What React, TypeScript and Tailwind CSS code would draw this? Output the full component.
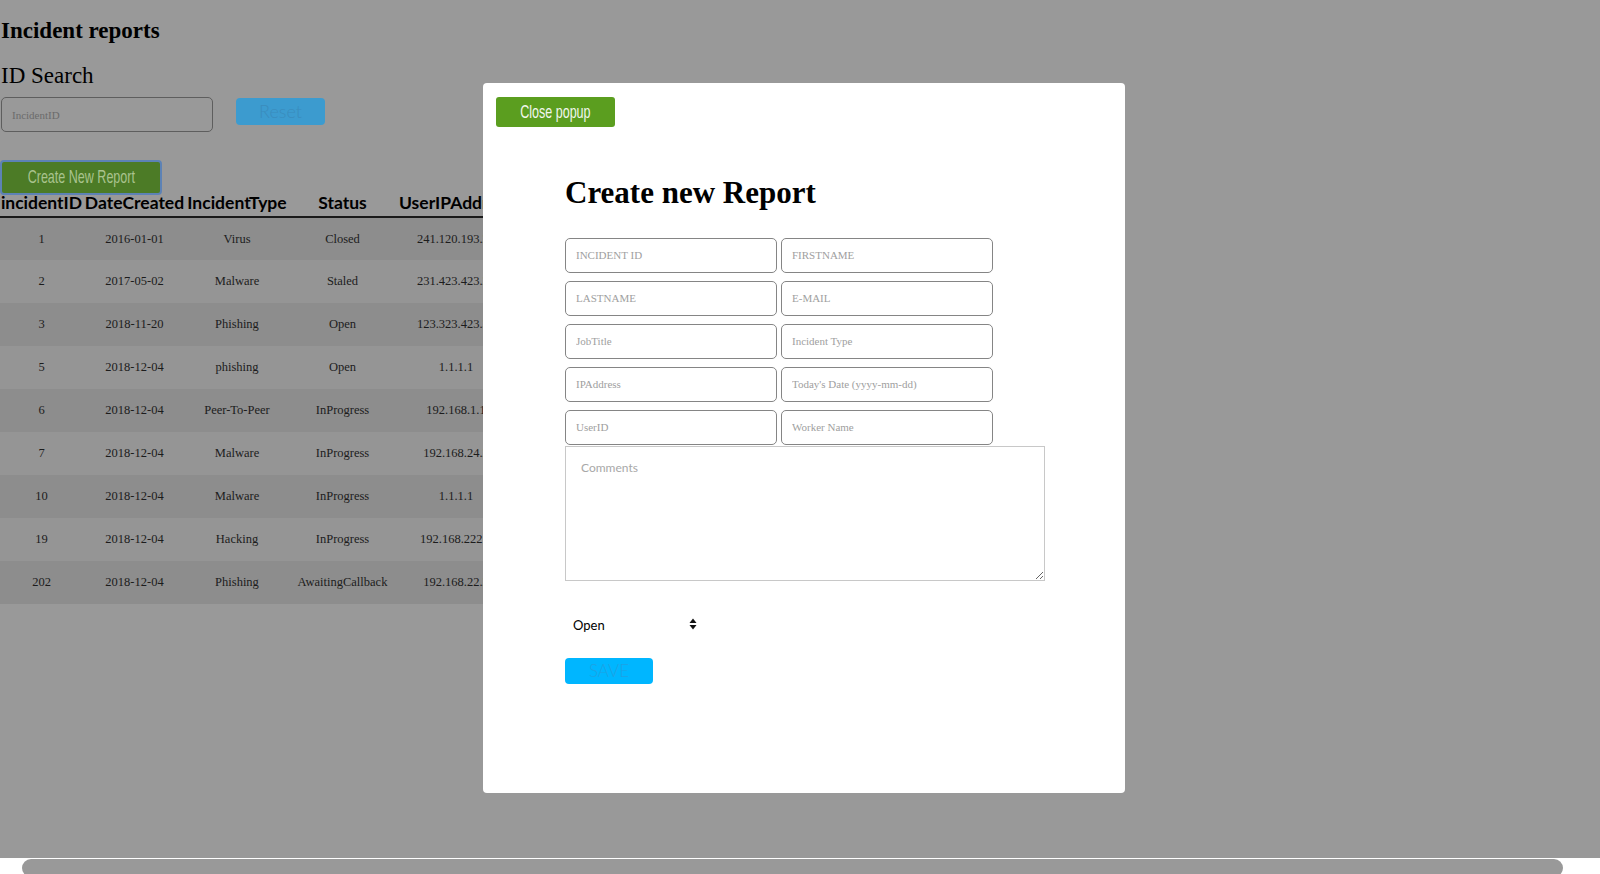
import { useState } from 'react';

// Incident rows shown behind the popup
const incidents = [
    { id: '1', date: '2016-01-01', type: 'Virus', status: 'Closed', ip: '241.120.193.24' },
    { id: '2', date: '2017-05-02', type: 'Malware', status: 'Staled', ip: '231.423.423.23' },
    { id: '3', date: '2018-11-20', type: 'Phishing', status: 'Open', ip: '123.323.423.33' },
    { id: '5', date: '2018-12-04', type: 'phishing', status: 'Open', ip: '1.1.1.1' },
    { id: '6', date: '2018-12-04', type: 'Peer-To-Peer', status: 'InProgress', ip: '192.168.1.1' },
    { id: '7', date: '2018-12-04', type: 'Malware', status: 'InProgress', ip: '192.168.24.2' },
    { id: '10', date: '2018-12-04', type: 'Malware', status: 'InProgress', ip: '1.1.1.1' },
    { id: '19', date: '2018-12-04', type: 'Hacking', status: 'InProgress', ip: '192.168.222.1' },
    { id: '202', date: '2018-12-04', type: 'Phishing', status: 'AwaitingCallback', ip: '192.168.22.2' },
];

const formFields = [
    'INCIDENT ID', 'FIRSTNAME',
    'LASTNAME', 'E-MAIL',
    'JobTitle', 'Incident Type',
    'IPAddress', "Today's Date (yyyy-mm-dd)",
    'UserID', 'Worker Name',
];

function SelectArrows() {
    return (
        <svg width="8" height="12" viewBox="0 0 8 12" className="pointer-events-none absolute left-[124px] top-[6px]">
            <path d="M4 0.5 L7.5 5 H0.5 Z" fill="#111" />
            <path d="M4 11.5 L7.5 7 H0.5 Z" fill="#111" />
        </svg>
    );
}

// narrow display font stand-in (no condensed family installed)
function Narrow({ children }: { children: string }) {
    return <span className="inline-block whitespace-nowrap scale-x-[0.66] font-['Liberation_Sans',sans-serif]">{children}</span>;
}

export default function App() {
    const [status, setStatus] = useState('Open');

    return (
        <div className="w-[1600px] h-[874px] overflow-hidden flex flex-col bg-white">
            <div className="relative h-[858px] bg-[#999999] pl-px">
                <h2 className="mt-[14px] text-[23px] leading-normal font-bold text-black font-['Liberation_Serif',serif]">
                    Incident reports
                </h2>
                <h3 className="mt-[10px] text-[23px] leading-normal text-black font-['Liberation_Serif',serif]">
                    ID Search
                </h3>
                <div className="mt-[4px] flex items-start gap-[23px]">
                    <input
                        placeholder="IncidentID"
                        className="w-[212px] h-[35px] rounded-[5px] border border-[#5e5e5e] bg-transparent px-[10px] text-[11px] font-['Liberation_Serif',serif] placeholder:text-[#6b6b6b] outline-none"
                    />
                    <button className="mt-px w-[89px] h-[27px] rounded-[4px] bg-[#3c9bcf] text-[18px] font-light text-[#3a8cbd] font-['Lato',sans-serif]">
                        Reset
                    </button>
                </div>
                <button className="mt-[28px] -ml-px flex items-center justify-center w-[162px] h-[35px] rounded-[4px] border-2 border-[#5d82b5] bg-[#4c7b26] text-[19px] text-[#a9c38e]">
                    <Narrow>Create New Report</Narrow>
                </button>

                <table className="table-fixed border-collapse -ml-px w-[515px]">
                    <thead>
                        <tr className="border-b-2 border-[#1a1a1a] font-['Lato',sans-serif] text-[17.5px] leading-[16px] font-bold text-black">
                            <th className="w-[83px] p-0 pb-[5px] font-bold">incidentID</th>
                            <th className="w-[103px] p-0 pb-[5px] font-bold">DateCreated</th>
                            <th className="w-[102px] p-0 pb-[5px] font-bold">IncidentType</th>
                            <th className="w-[109px] p-0 pb-[5px] font-bold">Status</th>
                            <th className="w-[118px] p-0 pb-[5px] font-bold whitespace-nowrap">UserIPAddress</th>
                        </tr>
                    </thead>
                    <tbody className="font-['Liberation_Serif',serif] text-[12.5px] text-[#1c1c1c]">
                        {incidents.map((r, i) => (
                            <tr key={r.id} className={i % 2 === 0 ? 'h-[43px] bg-[#8d8d8d]' : 'h-[43px] bg-[#959595]'}>
                                <td className="text-center">{r.id}</td>
                                <td className="text-center">{r.date}</td>
                                <td className="text-center">{r.type}</td>
                                <td className="text-center">{r.status}</td>
                                <td className="text-center whitespace-nowrap">{r.ip}</td>
                            </tr>
                        ))}
                    </tbody>
                </table>

                {/* popup */}
                <div className="absolute left-[483px] top-[83px] w-[642px] h-[710px] rounded-[4px] bg-white">
                    <button className="ml-[13px] mt-[14px] flex items-center justify-center w-[119px] h-[30px] rounded-[3px] bg-[#5b9e1f] text-[19px] text-[#f2f7ee]">
                        <Narrow>Close popup</Narrow>
                    </button>
                    <div className="ml-[82px]">
                        <h1 className="mt-[43px] text-[31px] leading-normal font-bold text-black font-['Liberation_Serif',serif]">
                            Create new Report
                        </h1>
                        <div className="mt-[21px] grid grid-cols-[212px_212px] gap-x-[4px] gap-y-[8px]">
                            {formFields.map((f) => (
                                <input
                                    key={f}
                                    placeholder={f}
                                    className="h-[35px] rounded-[5px] border border-[#858585] px-[10px] text-[11px] font-['Liberation_Serif',serif] placeholder:text-[#a0a0a0] outline-none"
                                />
                            ))}
                        </div>
                        <textarea
                            placeholder="Comments"
                            className="mt-px block w-[480px] h-[135px] border border-[#c8c8c8] px-[15px] pt-[12px] pb-[15px] text-[12px] font-['Lato',sans-serif] placeholder:text-[#a8a8a8] outline-none"
                        />
                        <div className="relative mt-[31px] w-[140px] h-[24px]">
                            <select
                                value={status}
                                onChange={(e) => setStatus(e.target.value)}
                                className="appearance-none w-full h-full bg-transparent pl-[8px] text-[13px] text-black font-['Lato',sans-serif] outline-none"
                            >
                                <option>Open</option>
                                <option>InProgress</option>
                                <option>AwaitingCallback</option>
                                <option>Staled</option>
                                <option>Closed</option>
                            </select>
                            <SelectArrows />
                        </div>
                        <button className="mt-[22px] w-[88px] h-[26px] rounded-[4px] bg-[#00b6ff] text-[17px] font-light text-[#1ea2e4] font-['Lato',sans-serif]">
                            SAVE
                        </button>
                    </div>
                </div>
            </div>

            {/* horizontal scrollbar */}
            <div className="h-[16px] bg-white pl-[22px] pr-[37px] pt-px">
                <div className="h-[18px] rounded-full bg-[#999999]" />
            </div>
        </div>
    );
}
